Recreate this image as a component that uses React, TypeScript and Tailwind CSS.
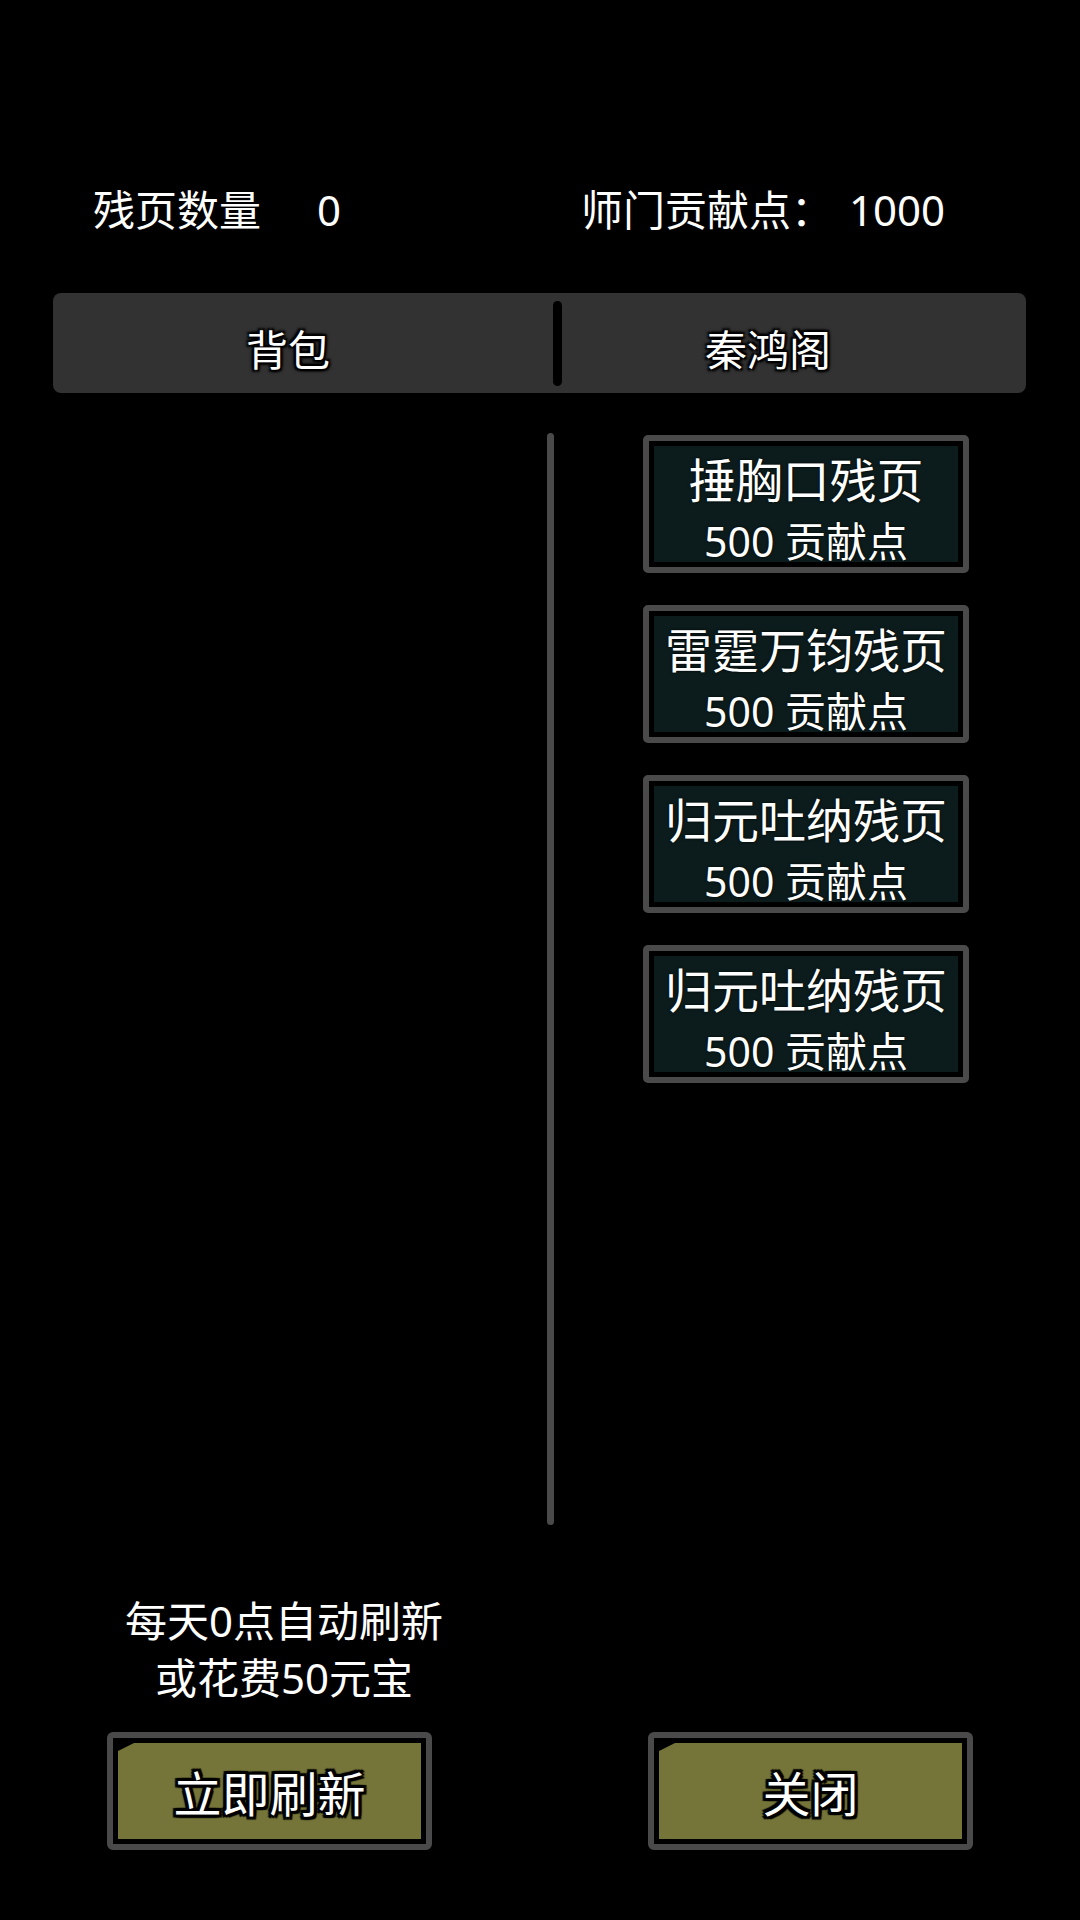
const cards = [
  { name: '捶胸口残页', cost: 500 },
  { name: '雷霆万钧残页', cost: 500 },
  { name: '归元吐纳残页', cost: 500 },
  { name: '归元吐纳残页', cost: 500 },
]

function ShopCard({ name, cost }: { name: string; cost: number }) {
  return (
    <div className="w-[326px] h-[138px] rounded-[5px] border-[6px] border-[#4a4a4a] bg-black p-[5px]">
      <div className="h-full bg-[#0c1c1c] pt-[5px] flex flex-col items-center text-white [text-shadow:0_0_3px_#000]">
        <p className="text-[47px] leading-[58px]">{name}</p>
        <p className="mt-[3px] text-[41px] leading-[58px]">{cost} 贡献点</p>
      </div>
    </div>
  )
}

function OliveButton({ label }: { label: string }) {
  return (
    <button className="w-[325px] h-[118px] rounded-[6px] border-[6px] border-[#4a4a4a] bg-black p-[5px]">
      <div className="h-full bg-[#75753a] [clip-path:polygon(16px_0,100%_0,100%_100%,0_100%,0_8px)] flex items-center justify-center">
        <span className="pt-[5px] text-[48px] leading-none text-white [text-shadow:-3px_-3px_1px_#000,3px_-3px_1px_#000,-3px_3px_1px_#000,3px_3px_1px_#000,0_3px_1px_#000,0_-3px_1px_#000,3px_0_1px_#000,-3px_0_1px_#000]">
          {label}
        </span>
      </div>
    </button>
  )
}

export default function App() {
  return (
    <div className="w-[1080px] h-[1920px] bg-black text-white font-['Noto_Sans','Noto_Sans_CJK_SC',sans-serif] overflow-hidden">
      {/* currency row */}
      <div className="mt-[186px] flex h-[48px] text-[42px] leading-[48px]">
        <div className="w-[581px] pl-[93px] flex">
          <span>残页数量</span>
          <span className="ml-[56px]">0</span>
        </div>
        <div className="flex">
          <span>师门贡献点：</span>
          <span className="ml-[16px]">1000</span>
        </div>
      </div>

      {/* tabs */}
      <div className="mt-[59px] ml-[53px] w-[973px] h-[100px] rounded-[8px] bg-[#323232] flex items-center text-[42px] [text-shadow:-2px_-2px_2px_#000,2px_-2px_2px_#000,-2px_2px_2px_#000,2px_2px_2px_#000,0_0_5px_#000]">
        <div className="w-[470px] pt-[12px] text-center">背包</div>
        <div className="ml-[30px] w-[9px] h-[85px] rounded-full bg-black" />
        <div className="w-[412px] pt-[12px] text-center">秦鸿阁</div>
      </div>

      {/* content */}
      <div className="mt-[40px] flex h-[1092px]">
        <div className="w-[547px]" />
        <div className="w-[7px] h-full rounded-full bg-[#4a4a4a]" />
        <div className="ml-[89px] mt-[2px] flex flex-col gap-[32px]">
          {cards.map((c, i) => (
            <ShopCard key={i} name={c.name} cost={c.cost} />
          ))}
        </div>
      </div>

      {/* refresh note */}
      <div className="mt-[67px] ml-[106px] w-[356px] text-center text-[42px] leading-[57px] [text-shadow:0_0_3px_#000]">
        <p>每天0点自动刷新</p>
        <p>或花费50元宝</p>
      </div>

      {/* actions */}
      <div className="mt-[26px] flex">
        <div className="ml-[107px]">
          <OliveButton label="立即刷新" />
        </div>
        <div className="ml-[216px]">
          <OliveButton label="关闭" />
        </div>
      </div>
    </div>
  )
}
